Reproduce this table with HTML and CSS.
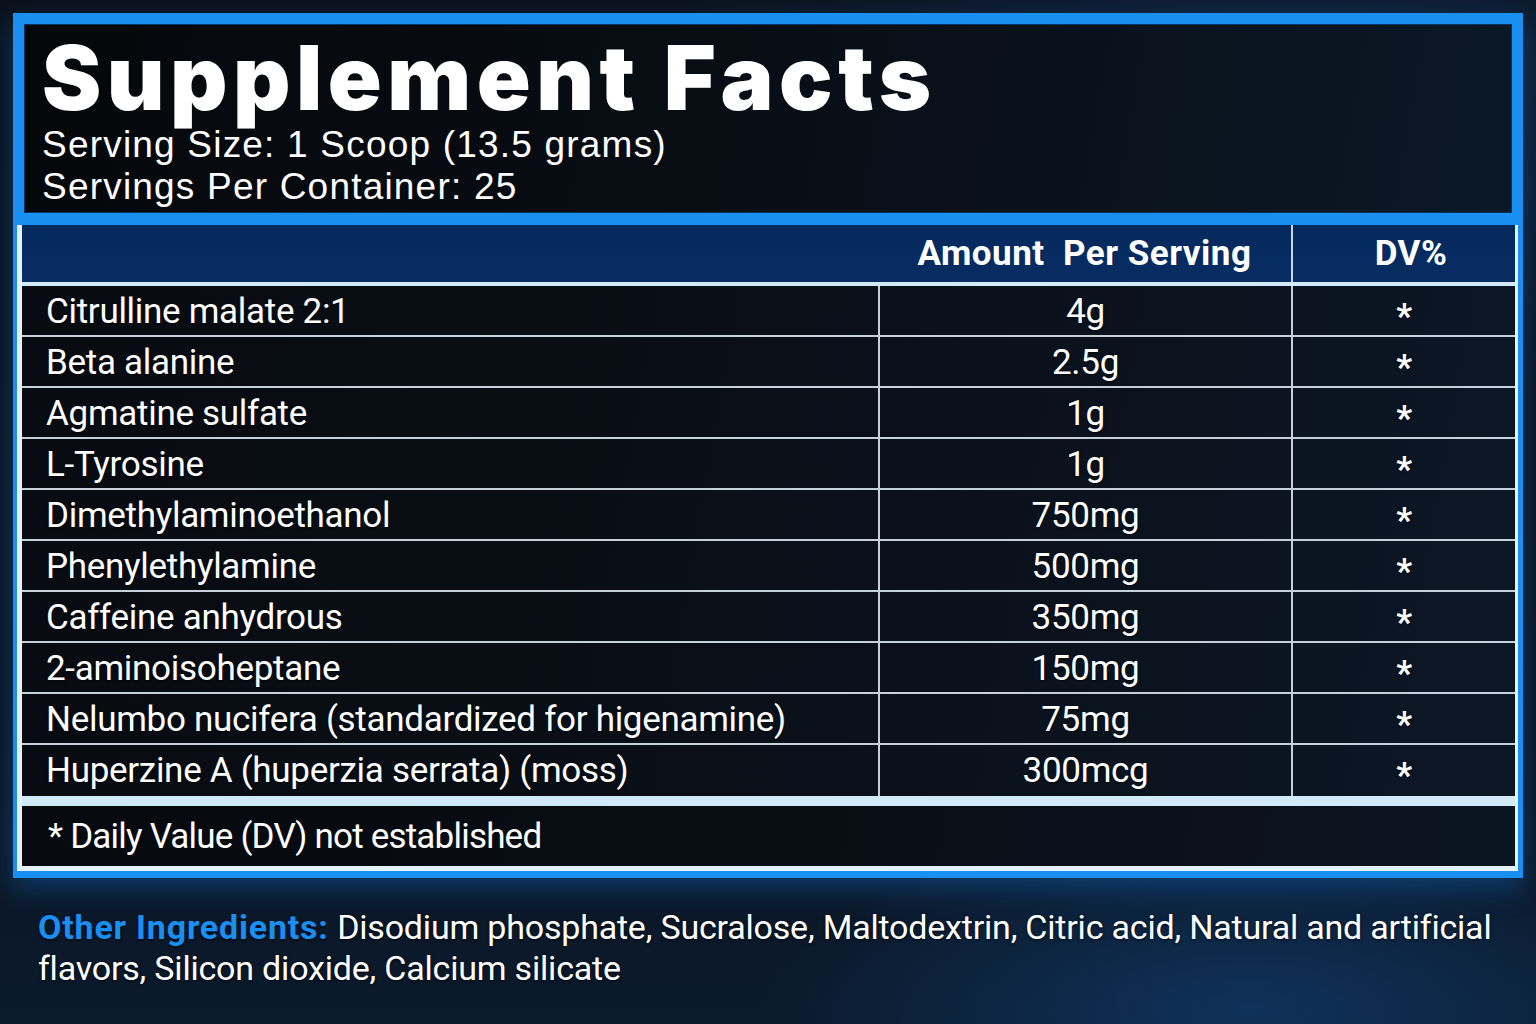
FILE: index.html
```html
<!DOCTYPE html>
<html lang="en">
<head>
<meta charset="utf-8">
<title>Supplement Facts</title>
<link rel="stylesheet" href="styles.css">
</head>
<body>
  <div class="frame">
    <div class="titlebox">
      <h1 class="title">Supplement Facts</h1>
      <p class="serv first">Serving Size: 1 Scoop (13.5 grams)</p>
      <p class="serv">Servings Per Container: 25</p>
    </div>
    <div class="facts">
      <div class="head">
        <div class="c1"></div>
        <div class="c2">Amount&nbsp; Per Serving</div>
        <div class="c3">DV%</div>
      </div>
      <div class="row"><div class="c1">Citrulline malate 2:1</div><div class="c2">4g</div><div class="c3">*</div></div>
      <div class="row"><div class="c1">Beta alanine</div><div class="c2">2.5g</div><div class="c3">*</div></div>
      <div class="row"><div class="c1">Agmatine sulfate</div><div class="c2">1g</div><div class="c3">*</div></div>
      <div class="row"><div class="c1">L-Tyrosine</div><div class="c2">1g</div><div class="c3">*</div></div>
      <div class="row"><div class="c1">Dimethylaminoethanol</div><div class="c2">750mg</div><div class="c3">*</div></div>
      <div class="row"><div class="c1">Phenylethylamine</div><div class="c2">500mg</div><div class="c3">*</div></div>
      <div class="row"><div class="c1">Caffeine anhydrous</div><div class="c2">350mg</div><div class="c3">*</div></div>
      <div class="row"><div class="c1">2-aminoisoheptane</div><div class="c2">150mg</div><div class="c3">*</div></div>
      <div class="row"><div class="c1">Nelumbo nucifera (standardized for higenamine)</div><div class="c2">75mg</div><div class="c3">*</div></div>
      <div class="row last"><div class="c1">Huperzine A (huperzia serrata) (moss)</div><div class="c2">300mcg</div><div class="c3">*</div></div>
      <div class="note">* Daily Value (DV) not established</div>
    </div>
  </div>
  <p class="other"><span class="lbl">Other Ingredients:</span> <span class="list">Disodium phosphate, Sucralose, Maltodextrin, Citric acid, Natural and artificial flavors, Silicon dioxide, Calcium silicate</span></p>
</body>
</html>
```
FILE: styles.css
```css
* { box-sizing: border-box; }
html, body { margin: 0; }
body {
  width: 1536px;
  height: 1024px;
  overflow: hidden;
  padding: 13px;
  color: #ffffff;
  font-family: Roboto, "Liberation Sans", sans-serif;
  background:
    radial-gradient(ellipse 700px 260px at 1250px 1010px, rgba(18, 70, 130, 0.55), rgba(18, 70, 130, 0) 70%),
    radial-gradient(ellipse 900px 500px at 1300px 80px, rgba(20, 55, 100, 0.45), rgba(20, 55, 100, 0) 70%),
    linear-gradient(180deg, #0b111a 0%, #0b1420 60%, #0b1a2c 100%);
}

.frame {
  background: #1a8ff2;
  padding: 11px 5px 7px 4px;
  box-shadow: 0 10px 26px rgba(20, 125, 235, 0.35);
}

.titlebox {
  margin: 0 6px 12px 7px;
  height: 189px;
  padding: 9px 0 0 18px;
  background: linear-gradient(100deg, #05070a 0%, #080d14 45%, #0b1826 100%);
  box-shadow: inset 0 0 0 1px #08345f;
}
.title {
  margin: 0;
  font-family: Inter, "Liberation Sans", sans-serif;
  font-weight: 900;
  font-size: 89px;
  line-height: 90px;
  letter-spacing: 5.5px;
}
.serv {
  margin: 0;
  font-family: "Liberation Sans", Arial, sans-serif;
  font-size: 37px;
  line-height: 42px;
  letter-spacing: 1.2px;
}
.serv.first { margin-top: 1px; }

.facts {
  border-style: solid;
  border-color: #e4f2fc;
  border-width: 0 3px 5px 5px;
  background: linear-gradient(100deg, #080b10 0%, #0a1019 55%, #0c1726 100%);
}

.head, .row {
  display: grid;
  grid-template-columns: 856px 413px 1fr;
}
.head {
  height: 61px;
  background: linear-gradient(180deg, #05295d 0%, #072d63 100%);
  border-bottom: 4px solid #d3eafb;
  font-weight: 700;
  font-size: 35px;
  letter-spacing: 0.5px;
}
.head > div, .row > div {
  display: flex;
  align-items: center;
  justify-content: center;
  white-space: nowrap;
}
.head .c3 { border-left: 2px solid #c7d8e8; padding-left: 14px; }

.row {
  height: 51px;
  border-bottom: 2px solid #c6d0da;
  font-size: 35px;
  letter-spacing: -0.3px;
  text-shadow: 0 1px 2px rgba(0, 0, 0, 0.6);
}
.row.last { border-bottom: 0; }
.row > .c1 { justify-content: flex-start; padding-left: 24px; }
.row > .c2, .row > .c3 { border-left: 2px solid #c6d0da; }
.row > .c3 { font-weight: 700; padding-top: 10px; }

.note {
  height: 70px;
  border-top: 10px solid #d2e9f8;
  padding-left: 26px;
  display: flex;
  align-items: center;
  font-size: 35px;
  letter-spacing: -0.8px;
  background: linear-gradient(100deg, #06090d 0%, #0a0f17 60%, #0b1522 100%);
}

.other {
  margin: 29px 0 0 25px;
  width: 1485px;
  font-size: 34px;
  line-height: 41px;
  text-shadow: 0 1px 3px rgba(0, 0, 0, 0.7);
}
.lbl {
  color: #1a8ff2;
  font-weight: 700;
  letter-spacing: 0.8px;
}
.list { letter-spacing: -0.2px; }
```
